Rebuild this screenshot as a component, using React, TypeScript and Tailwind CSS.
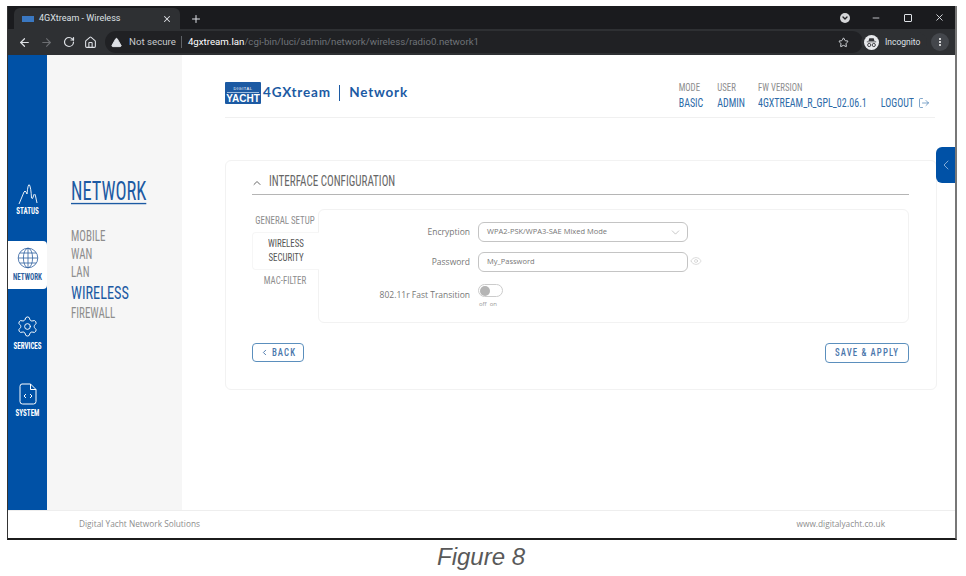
import React from 'react';
import {
  ArrowLeft,
  ArrowRight,
  ChevronDown,
  ChevronLeft,
  ChevronUp,
  Eye,
  Home,
  LogOut,
  Minus,
  Plus,
  RotateCw,
  Settings,
  Star,
  TriangleAlert,
  X,
} from 'lucide-react';

const narrow = "font-['Roboto',sans-serif] font-stretch-[75%] whitespace-nowrap";

const subMenu = ['MOBILE', 'WAN', 'LAN'];

function IncognitoIcon() {
  return (
    <svg width="15" height="15" viewBox="0 0 15 15">
      <circle cx="7.5" cy="7.5" r="7.5" fill="#e8eaed" />
      <path d="M4.5 6 L5.3 3.2 H9.7 L10.5 6 Z M2.8 6.4 H12.2 V7.2 H2.8 Z" fill="#35363a" />
      <circle cx="5.2" cy="10" r="1.6" fill="none" stroke="#35363a" strokeWidth="0.9" />
      <circle cx="9.8" cy="10" r="1.6" fill="none" stroke="#35363a" strokeWidth="0.9" />
    </svg>
  );
}

function BrowserBar() {
  return (
    <div className="bg-[#202124] text-[#dee1e6] font-['Roboto',sans-serif]">
      <div className="h-[23px] flex items-end pl-[6px] pr-[10px] bg-[#1a1b1e]">
        <div className="w-[166px] h-[21px] bg-[#2e3033] rounded-t-md flex items-center pl-[8px] pr-[8px] text-[9px]">
          <div className="w-[12px] h-[6px] bg-[#3a78c2] mr-[5px]" />
          <span className="flex-1">4GXtream - Wireless</span>
          <X size={10} strokeWidth={2.5} />
        </div>
        <Plus size={12} strokeWidth={2} className="ml-[10px] mb-[4px]" />
        <div className="flex-1" />
        <div className="flex items-center mb-[6px]">
          <div className="w-[10px] h-[10px] rounded-full bg-[#d5d6d8] flex items-center justify-center mr-[21px]">
            <ChevronDown size={8} strokeWidth={4} className="text-[#202124]" />
          </div>
          <Minus size={10} className="mr-[23px]" />
          <div className="w-[8px] h-[8px] border border-[#dee1e6] rounded-[1px] mr-[22px]" />
          <X size={11} />
        </div>
      </div>
      <div className="h-[26px] flex items-center bg-[#2e3033] pl-[10px] pr-[6px]">
        <ArrowLeft size={13} strokeWidth={2.2} />
        <ArrowRight size={13} strokeWidth={2} className="ml-[9px] text-[#6c6e72]" />
        <RotateCw size={12} strokeWidth={2.4} className="ml-[10px]" />
        <Home size={13} strokeWidth={2} className="ml-[9px]" />
        <div className="ml-[8px] flex-1 h-[22px] bg-[#202124] rounded-full flex items-center pl-[6px] pr-[5px] text-[9.7px]">
          <TriangleAlert size={11} fill="#dee1e6" stroke="#dee1e6" />
          <span className="ml-[7px] text-[#c8cacd]">Not secure</span>
          <span className="ml-[5px] h-[12px] w-px bg-[#5f6368]" />
          <span className="ml-[6px] text-white">4gxtream.lan</span>
          <span className="text-[#6f7378]">/cgi-bin/luci/admin/network/wireless/radio0.network1</span>
          <div className="flex-1" />
          <Star size={11} className="mr-[9px]" />
        </div>
        <div className="ml-[-2px] w-[66px] h-[20px] rounded-full bg-[#2e3033] flex items-center pl-[3px] text-[8.5px]">
          <IncognitoIcon />
          <span className="ml-[6px]">Incognito</span>
        </div>
        <div className="ml-[4px] w-[18px] h-[18px] rounded-full bg-[#44474c] flex flex-col items-center justify-center gap-[1px]">
          <span className="w-[2px] h-[2px] bg-white rounded-full" />
          <span className="w-[2px] h-[2px] bg-white rounded-full" />
          <span className="w-[2px] h-[2px] bg-white rounded-full" />
        </div>
      </div>
    </div>
  );
}

function StatusIcon() {
  return (
    <svg width="20" height="21" viewBox="0 0 20 21" fill="none" stroke="currentColor" strokeWidth="0.9" className="-mb-[2px]">
      <path d="M1 20 L6 8 Q7 6 8 8 L9 10 Q10 -1 11.5 1 Q13 4 13.5 14 Q14.5 16 15.5 12 Q16.5 8 17.5 12 L19 19" />
    </svg>
  );
}

function GlobeIcon() {
  return (
    <svg width="22" height="22" viewBox="0 0 22 22" fill="none" stroke="currentColor" strokeWidth="0.8">
      <circle cx="11" cy="11" r="9.8" />
      <ellipse cx="11" cy="11" rx="4.6" ry="9.8" />
      <path d="M11 1.2 V20.8 M1.2 11 H20.8 M2.8 6 H19.2 M2.8 16 H19.2" />
    </svg>
  );
}

function SystemIcon() {
  return (
    <svg width="18" height="22" viewBox="0 0 18 22" fill="none" stroke="currentColor" strokeWidth="1">
      <path d="M3 1 H11.5 L17 6.5 V18.5 Q17 21 14.5 21 H3.5 Q1 21 1 18.5 V3.5 Q1 1 3 1 Z M11.5 1 V6.5 H17" />
      <path d="M7 11 L5 13 L7 15 M11 11 L13 13 L11 15" />
    </svg>
  );
}

function SideItem({ label, icon, active, mt }: { label: string; icon: React.ReactNode; active?: boolean; mt: string }) {
  return (
    <div
      className={`${narrow} ${mt} h-[48px] flex flex-col items-center justify-center font-bold text-[7px] rounded-r-sm ${
        active ? 'bg-white text-[#2e5f9f]' : 'text-white'
      }`}
    >
      {icon}
      <span className="mt-[2px] leading-[12px] scale-y-[1.4]">{label}</span>
    </div>
  );
}

function Sidebar() {
  return (
    <div className="w-[39px] bg-[#0051a6] pt-[121px] shrink-0">
      <SideItem mt="mt-[0px]" label="STATUS" icon={<StatusIcon />} />
      <SideItem mt="mt-[17px]" active label="NETWORK" icon={<GlobeIcon />} />
      <SideItem mt="mt-[20px]" label="SERVICES" icon={<Settings size={23} strokeWidth={1} />} />
      <SideItem mt="mt-[20px]" label="SYSTEM" icon={<SystemIcon />} />
    </div>
  );
}

function SubMenu() {
  return (
    <div className={`${narrow} w-[135px] bg-[#f6f6f6] pl-[24px] pt-[123px] shrink-0`}>
      <div className="text-[18.4px] leading-[28px] text-[#1c5aa3] underline underline-offset-2 scale-y-[1.36]">
        NETWORK
      </div>
      <div className="mt-[22px] text-[#8d8d8d] text-[11px] leading-[18px]">
        {subMenu.map((item) => (
          <div key={item} className="scale-y-[1.36]">
            {item}
          </div>
        ))}
        <div className="text-[#1c5aa3] text-[14.3px] leading-[23px] scale-y-[1.33]">WIRELESS</div>
        <div className="scale-y-[1.36]">FIREWALL</div>
      </div>
    </div>
  );
}

function Header() {
  return (
    <div className="flex items-center h-[62px] pt-[12px] border-b border-[#f0f0f0] mr-[1px]">
      <div className="w-[36px] h-[22px] bg-[#1c5aa3] rounded-[1px] flex flex-col items-center justify-end text-white leading-none">
        <span className="text-[4px] font-['Liberation_Sans',sans-serif] tracking-[0.5px]">DIGITAL</span>
        <span className="w-[32px] h-[1px] bg-[#9dbbdc] my-[1px]" />
        <span className="text-[10px] font-bold font-['Liberation_Sans',sans-serif]">YACHT</span>
      </div>
      <span className="ml-[2px] text-[13.5px] font-bold text-[#1c5aa3] tracking-[0.8px] font-['Lato',sans-serif]">
        4GXtream
      </span>
      <span className="ml-[8px] h-[16px] w-[1.5px] bg-[#1c5aa3]" />
      <span className="ml-[9px] text-[13.5px] font-bold text-[#1c5aa3] tracking-[0.8px] font-['Lato',sans-serif]">
        Network
      </span>
      <div className="flex-1" />
      <div className={`${narrow} flex text-[10px] leading-[16px] pt-[4px]`}>
        <div>
          <div className="text-[8.8px] text-[#8d8d8d] scale-y-[1.3]">MODE</div>
          <div className="text-[#2e6ba8] scale-y-[1.35]">BASIC</div>
        </div>
        <div className="ml-[14px]">
          <div className="text-[8.8px] text-[#8d8d8d] scale-y-[1.3]">USER</div>
          <div className="text-[#2e6ba8] scale-y-[1.35]">ADMIN</div>
        </div>
        <div className="ml-[13px]">
          <div className="text-[8.8px] text-[#8d8d8d] scale-y-[1.3]">FW VERSION</div>
          <div className="text-[#2e6ba8] scale-y-[1.35]">4GXTREAM_R_GPL_02.06.1</div>
        </div>
        <div className="ml-[14px] mr-[5px]">
          <div>&nbsp;</div>
          <div className="text-[#2e6ba8] flex items-center">
            <span className="scale-y-[1.35]">LOGOUT</span>
            <LogOut size={12} strokeWidth={1.2} className="ml-[4px]" />
          </div>
        </div>
      </div>
    </div>
  );
}

function ConfigCard() {
  const labelCls = 'w-[151px] text-right text-[8.5px] text-[#777]';
  return (
    <div className="mt-[42px] mr-[-1px] h-[230px] border border-[#f2f2f2] rounded-md pl-[26px] pr-[27px] pt-[13px]">
      <div className={`${narrow} flex items-center h-[21px] border-b border-[#b5b5b5] text-[#666] text-[11.1px] pb-[3px]`}>
        <ChevronUp size={12} strokeWidth={2} className="ml-[-1px] mr-[6px]" />
        <span className="scale-y-[1.35]">INTERFACE CONFIGURATION</span>
      </div>
      <div className="flex mt-[14px]">
        <div className={`${narrow} w-[66px] text-center text-[8.9px] leading-[14px] text-[#8d8d8d] pt-[5px]`}>
          <div className="h-[18px] scale-y-[1.3]">GENERAL SETUP</div>
          <div className="h-[38px] -mr-px pt-[3px] bg-white text-[#555] border-l border-y border-[#f6f6f6] rounded-l relative z-10">
            <div className="scale-y-[1.3]">WIRELESS</div>
            <div className="scale-y-[1.3]">SECURITY</div>
          </div>
          <div className="mt-[3px] scale-y-[1.3]">MAC-FILTER</div>
        </div>
        <div className="flex-1 h-[114px] border border-[#f2f2f2] rounded-md pt-[12px] font-['Open_Sans',sans-serif]">
          <div className="flex items-center h-[20px]">
            <div className={labelCls}>Encryption</div>
            <div className="ml-[8px] w-[210px] h-[20px] border border-[#c4c4c4] rounded-md flex items-center pl-[8px] pr-[5px] text-[7.5px] text-[#777]">
              <span className="flex-1">WPA2-PSK/WPA3-SAE Mixed Mode</span>
              <ChevronDown size={13} strokeWidth={1} className="text-[#999]" />
            </div>
          </div>
          <div className="flex items-center h-[20px] mt-[10px]">
            <div className={labelCls}>Password</div>
            <div className="ml-[8px] w-[210px] h-[20px] border border-[#c4c4c4] rounded-md flex items-center pl-[8px] text-[7.5px] text-[#777]">
              My_Password
            </div>
            <Eye size={12} strokeWidth={1} className="ml-[2px] -mt-[3px] text-[#bbb]" />
          </div>
          <div className="flex mt-[12px]">
            <div className={`${labelCls} pt-[5px]`}>802.11r Fast Transition</div>
            <div className="ml-[8px]">
              <div className="w-[25px] h-[13px] border border-[#ccc] rounded-full flex items-center">
                <div className="w-[10px] h-[10px] rounded-full bg-[#b5b5b5] ml-[1px]" />
              </div>
              <div className="text-[6px] leading-[8px] mt-[3px] text-[#999] pl-[1px]">off&nbsp;&nbsp;on</div>
            </div>
          </div>
        </div>
      </div>
      <div className={`${narrow} flex justify-between mt-[20px] text-[8.8px] font-medium tracking-[1.1px] text-[#4a76ab]`}>
        <div className="w-[52px] h-[19px] border border-[#5b8fbd] rounded flex items-center justify-center">
          <ChevronLeft size={9} strokeWidth={2.5} className="mr-[3px]" />
          <span className="scale-y-[1.3]">BACK</span>
        </div>
        <div className="w-[84px] h-[20px] border border-[#5b8fbd] rounded flex items-center justify-center">
          <span className="scale-y-[1.3]">SAVE &amp; APPLY</span>
        </div>
      </div>
    </div>
  );
}

export default function App() {
  return (
    <div className="w-[966px] h-[576px] bg-white overflow-hidden pt-[6px] pl-[7px]">
      <div className="w-[950px] h-[534px] border-l border-r-2 border-l-[#333] border-r-[#777] border-b-2 border-b-[#1c1c1c] flex flex-col relative">
        <BrowserBar />
        <div className="flex flex-1 min-h-0">
          <Sidebar />
          <SubMenu />
          <div className="flex-1 pl-[43px] pr-[19px] pt-[1px]">
            <Header />
            <ConfigCard />
          </div>
        </div>
        <div className="h-[28px] shrink-0 border-t border-[#eeeeee] flex items-center justify-between pl-[71px] pr-[70px] text-[8.3px] text-[#8d8d8d] font-['Open_Sans',sans-serif]">
          <span>Digital Yacht Network Solutions</span>
          <span>www.digitalyacht.co.uk</span>
        </div>
        <div className="absolute right-0 top-[141px] w-[19px] h-[36px] bg-[#0051a6] rounded-l-md flex items-center justify-center text-[#c4d8ee]">
          <ChevronLeft size={16} strokeWidth={1} />
        </div>
      </div>
      <div className="w-[948px] text-center italic text-[24px] leading-[26px] mt-[4px] text-[#595959] font-['Liberation_Sans',sans-serif]">
        Figure 8
      </div>
    </div>
  );
}
